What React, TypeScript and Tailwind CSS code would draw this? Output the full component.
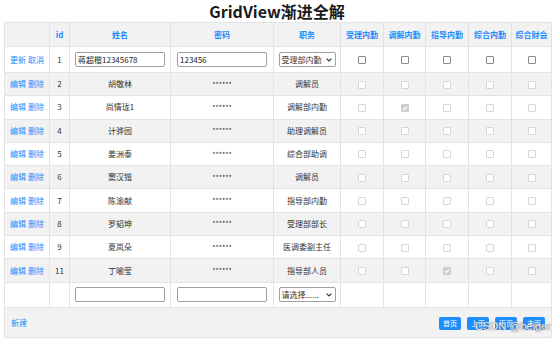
import type { ReactNode } from "react";

const rows = [
  { id: 2, name: "胡敬林", job: "调解员", checks: [false, false, false, false, false] },
  { id: 3, name: "尚情珑1", job: "调解部内勤", checks: [false, true, false, false, false] },
  { id: 4, name: "计骅园", job: "助理调解员", checks: [false, false, false, false, false] },
  { id: 5, name: "姜洲泰", job: "综合部助调", checks: [false, false, false, false, false] },
  { id: 6, name: "窦汉锴", job: "调解员", checks: [false, false, false, false, false] },
  { id: 7, name: "陈渝献", job: "指导部内勤", checks: [false, false, false, false, false] },
  { id: 8, name: "罗韬坤", job: "受理部部长", checks: [false, false, false, false, false] },
  { id: 9, name: "夏岚朵", job: "医调委副主任", checks: [false, false, false, false, false] },
  { id: 11, name: "丁喻莹", job: "指导部人员", checks: [false, false, true, false, false] },
];

const heads = ["受理内勤", "调解内勤", "指导内勤", "综合内勤", "综合财会"];

function Box({ enabled, checked }: { enabled?: boolean; checked?: boolean }) {
  if (checked) {
    return (
      <span className="inline-flex h-[8px] w-[8px] items-center justify-center rounded-[1px] bg-[#cdcdcd] align-middle">
        <svg width="6" height="6" viewBox="0 0 6 6">
          <path d="M1 3.2 L2.4 4.6 L5 1.4" stroke="#fff" strokeWidth="1.1" fill="none" />
        </svg>
      </span>
    );
  }
  return (
    <span
      className={`inline-block h-[8px] w-[8px] rounded-[1px] border bg-white align-middle ${
        enabled ? "border-[#8a8a8a]" : "border-[#d6d6d6]"
      }`}
    />
  );
}

function Field({ value }: { value?: string }) {
  return (
    <div className="mx-auto flex h-[15px] w-[90px] items-center whitespace-nowrap rounded-[2px] border border-[#a0a0a0] bg-white px-[2px] text-[8px] leading-none text-[#222]">
      {value}
    </div>
  );
}

function Pick({ label }: { label: string }) {
  return (
    <div className="mx-auto flex h-[15px] w-[57px] items-center justify-between whitespace-nowrap rounded-[2px] border border-[#a0a0a0] bg-white pl-[2px] pr-[3px] text-[8px] leading-none text-[#333]">
      <span>{label}</span>
      <svg width="6" height="4" viewBox="0 0 6 4">
        <path d="M0.6 0.6 L3 3 L5.4 0.6" stroke="#333" strokeWidth="1.1" fill="none" />
      </svg>
    </div>
  );
}

function Td({ children, className = "" }: { children?: ReactNode; className?: string }) {
  return (
    <td className={`whitespace-nowrap border border-[#e3e3e3] p-0 text-center align-middle leading-none ${className}`}>
      {children}
    </td>
  );
}

export default function App() {
  return (
    <div className="relative h-[339px] w-[554px] overflow-hidden bg-white font-['Noto_Sans_CJK_SC',sans-serif] text-[8px] text-[#333]">
      <h1 className="flex h-[22px] items-center justify-center text-[16px] font-bold leading-none text-[#1a1a1a]">
        GridView渐进全解
      </h1>

      <table className="ml-[4px] w-[547px] table-fixed border-collapse">
        <colgroup>
          <col className="w-[45px]" />
          <col className="w-[20px]" />
          <col className="w-[101px]" />
          <col className="w-[103px]" />
          <col className="w-[67px]" />
          <col className="w-[43px]" />
          <col className="w-[42px]" />
          <col className="w-[43px]" />
          <col className="w-[43px]" />
          <col className="w-[40px]" />
        </colgroup>
        <thead>
          <tr className="h-[24px] bg-[#f2f2f2] text-[8px] font-bold text-[#1e8cff]">
            <Td />
            <Td>id</Td>
            <Td>姓名</Td>
            <Td>密码</Td>
            <Td>职务</Td>
            {heads.map((h) => (
              <Td key={h}>{h}</Td>
            ))}
          </tr>
        </thead>
        <tbody>
          <tr className="h-[26px] bg-white">
            <Td className="text-[#1e8cff]">更新 取消</Td>
            <Td>1</Td>
            <Td>
              <Field value="蒋超楷12345678" />
            </Td>
            <Td>
              <Field value="123456" />
            </Td>
            <Td>
              <Pick label="受理部内勤" />
            </Td>
            {heads.map((h) => (
              <Td key={h}>
                <Box enabled />
              </Td>
            ))}
          </tr>
          {rows.map((r, i) => (
            <tr key={r.id} className={`h-[23.3px] ${i % 2 === 0 ? "bg-[#f2f2f2]" : "bg-white"}`}>
              <Td className="text-[#1e8cff]">编辑 删除</Td>
              <Td>{r.id}</Td>
              <Td>{r.name}</Td>
              <Td className="text-[7px]">******</Td>
              <Td>{r.job}</Td>
              {r.checks.map((c, j) => (
                <Td key={j}>
                  <Box checked={c} />
                </Td>
              ))}
            </tr>
          ))}
          <tr className="h-[25px] bg-white">
            <Td />
            <Td />
            <Td>
              <Field />
            </Td>
            <Td>
              <Field />
            </Td>
            <Td>
              <Pick label="请选择......" />
            </Td>
            <Td />
            <Td />
            <Td />
            <Td />
            <Td />
          </tr>
          <tr className="h-[30px] bg-[#f2f2f2]">
            <td colSpan={10} className="border border-[#e3e3e3] p-0">
              <div className="flex items-center justify-between pl-[6px] pr-[6px] leading-none">
                <span className="pt-[2px] text-[#1e8cff]">新建</span>
                <div className="flex gap-[6px] pt-[2px]">
                  {["首页", "上页", "下页", "末页"].map((b) => (
                    <span
                      key={b}
                      className="flex h-[13px] w-[22px] items-center justify-center rounded-[2px] bg-[#1e8cff] text-[7px] leading-none text-white"
                    >
                      {b}
                    </span>
                  ))}
                </div>
              </div>
            </td>
          </tr>
        </tbody>
      </table>

      <span className="pointer-events-none absolute right-[3px] top-[321px] font-['Liberation_Sans',sans-serif] text-[11px] leading-none text-white/85 [text-shadow:0_0_1px_#777,0_0_1px_#777]">
        CSDN @beiger
      </span>
    </div>
  );
}
